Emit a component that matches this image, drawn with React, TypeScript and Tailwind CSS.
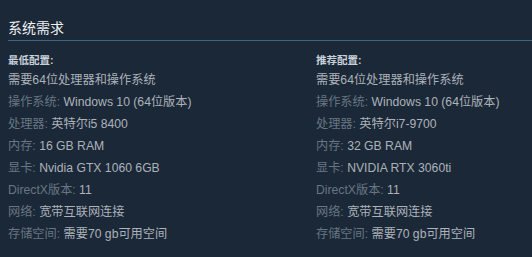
const minimum = [
  { label: '', value: '需要64位处理器和操作系统' },
  { label: '操作系统:', value: 'Windows 10 (64位版本)' },
  { label: '处理器:', value: '英特尔i5 8400' },
  { label: '内存:', value: '16 GB RAM' },
  { label: '显卡:', value: 'Nvidia GTX 1060 6GB' },
  { label: 'DirectX版本:', value: '11' },
  { label: '网络:', value: '宽带互联网连接' },
  { label: '存储空间:', value: '需要70 gb可用空间' },
];

const recommended = [
  { label: '', value: '需要64位处理器和操作系统' },
  { label: '操作系统:', value: 'Windows 10 (64位版本)' },
  { label: '处理器:', value: '英特尔i7-9700' },
  { label: '内存:', value: '32 GB RAM' },
  { label: '显卡:', value: 'NVIDIA RTX 3060ti' },
  { label: 'DirectX版本:', value: '11' },
  { label: '网络:', value: '宽带互联网连接' },
  { label: '存储空间:', value: '需要70 gb可用空间' },
];

const ReqColumn = ({ title, rows }: { title: string; rows: { label: string; value: string }[] }) => (
  <div>
    <div className="text-[10.5px] font-bold leading-[18px] text-[#c7d0d8]">{title}</div>
    <ul>
      {rows.map((row, i) => (
        <li key={i} className="text-[12.2px] leading-[22px] text-[#acb2b8] whitespace-nowrap">
          {row.label && <span className="text-[#687683]">{row.label} </span>}
          {row.value}
        </li>
      ))}
    </ul>
  </div>
);

export default function App() {
  return (
    <div
      className="w-[532px] h-[257px] bg-[#1b2838] overflow-hidden"
      style={{ fontFamily: '"Liberation Sans", Arial, "Noto Sans CJK SC", sans-serif' }}
    >
      <div className="pl-2 pt-[19px]">
        <h2 className="text-[14px] leading-[18px] text-[#eef0f2] pb-[3px] border-b border-[#3a6680]">
          系统需求
        </h2>
        <div className="grid grid-cols-[308px_1fr] mt-[10px]">
          <ReqColumn title="最低配置:" rows={minimum} />
          <ReqColumn title="推荐配置:" rows={recommended} />
        </div>
      </div>
    </div>
  );
}
